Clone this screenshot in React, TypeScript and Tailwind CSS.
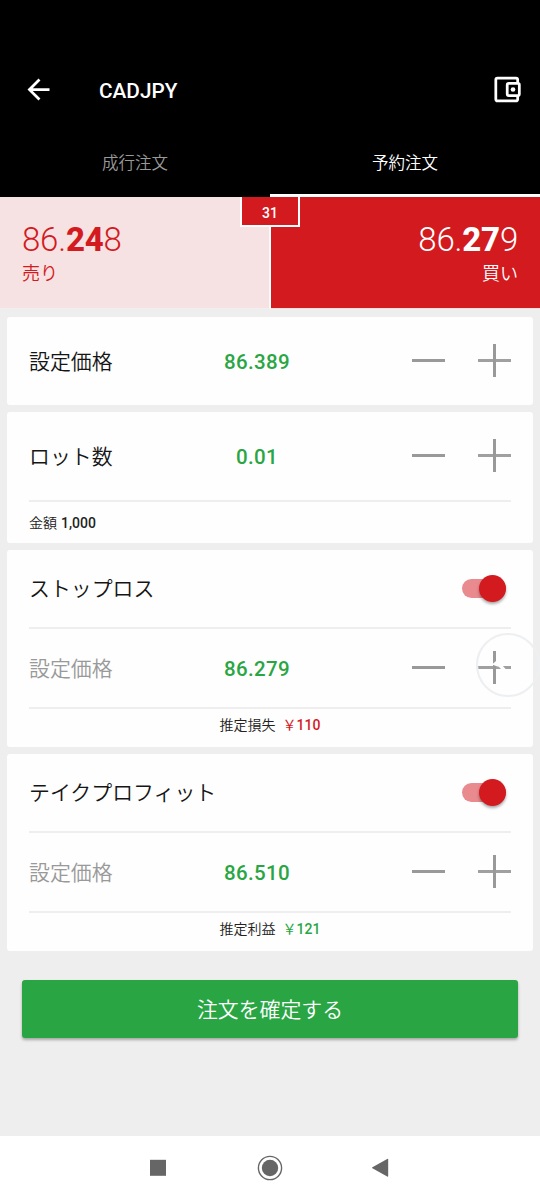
import type { ReactNode } from "react";

function Minus() {
  return (
    <svg className="block h-[33px] w-[33px]" viewBox="0 0 33 33" aria-hidden="true">
      <path d="M0 15h33v3H0z" fill="#999999" />
    </svg>
  );
}

function Plus() {
  return (
    <svg className="block h-[33px] w-[33px]" viewBox="0 0 33 33" aria-hidden="true">
      <path d="M0 15h33v3H0z" fill="#a0a0a0" />
      <path d="M15 0h3v33h-3z" fill="#999999" />
    </svg>
  );
}

function Touch() {
  return (
    <svg
      className="pointer-events-none absolute -top-[19px] -left-[3px] h-[66px] w-[66px]"
      viewBox="0 0 66 66"
      aria-hidden="true"
    >
      <circle cx="33" cy="33" r="31" fill="none" stroke="#edeff1" strokeWidth="2.2" />
      <path d="M17 32.5 L21 29 L25.5 34 L22.5 34.5 Z" fill="#fefefe" />
      <path d="M22.5 33.5 L27.5 33.5 L31 37.5 L27 38 Z" fill="#fefefe" />
    </svg>
  );
}

type StepperProps = { label: string; value: string; muted?: boolean; touched?: boolean };

function Stepper({ label, value, muted, touched }: StepperProps) {
  return (
    <div className="flex h-full items-center">
      <div className={muted ? "w-[168px] pt-0.5 text-[#999999]" : "w-[168px] pt-0.5 text-[#151515]"}>{label}</div>
      <div className="w-[120px] pt-0.5 text-center text-[20.5px] font-medium tracking-[0.35px] text-[#29a643]">{value}</div>
      <div className="relative -top-px ml-auto flex gap-[33px]">
        <button aria-label="minus"><Minus /></button>
        <button aria-label="plus" className="relative">
          <Plus />
          {touched && <Touch />}
        </button>
      </div>
    </div>
  );
}

function Card({ className, children }: { className: string; children: ReactNode }) {
  return <section className={"rounded-[3px] bg-[#fefefe] px-[22px] " + className}>{children}</section>;
}

function Switch() {
  return (
    <button role="switch" aria-checked="true" aria-label="toggle" className="mr-[5px] flex h-7 w-[44px] items-center rounded-full">
      <span className="flex h-[19px] w-full items-center justify-end rounded-full bg-[#e98a8f]">
        <span className="h-[27px] w-[27px] shrink-0 rounded-full bg-[#d31a1f] shadow-[0_2px_3px_rgba(0,0,0,0.35)]" />
      </span>
    </button>
  );
}

type LimitProps = { title: string; value: string; label: string; amount: string; color: string; touched?: boolean };

function LimitCard({ title, value, label, amount, color, touched }: LimitProps) {
  return (
    <Card className="h-[197px]">
      <div className="flex h-[77px] items-center justify-between text-[#151515]">
        <span className="pt-px">{title}</span>
        <Switch />
      </div>
      <div className="h-[82px] border-y-2 border-[#eeeeee]">
        <Stepper label="設定価格" value={value} muted touched={touched} />
      </div>
      <div className="flex h-[32px] items-center justify-center gap-[7px] text-[14px] text-[#222222]">
        <span>{label}</span>
        <span className={"font-medium " + color}>
          <span className="font-normal">￥</span>{amount}
        </span>
      </div>
    </Card>
  );
}

export default function App() {
  return (
    <div className="flex h-[1200px] w-[540px] flex-col overflow-hidden bg-[#eeeeee] font-[Roboto,'Noto_Sans_CJK_JP',sans-serif] text-[20.9px] leading-none font-[350]">
      <header className="flex h-[197px] shrink-0 flex-col bg-black pt-[59px] text-white">
        <div className="flex h-[60px] items-center pr-[16px] pl-[22px]">
          <svg className="h-[33px] w-[33px]" viewBox="0 0 24 24" fill="currentColor" aria-hidden="true">
            <path d="M20 11H7.83l5.59-5.59L12 4l-8 8 8 8 1.41-1.41L7.83 13H20v-2z" />
          </svg>
          <h1 className="ml-11 pt-1 text-[20.8px] font-medium">CADJPY</h1>
          <svg className="ml-auto h-[33px] w-[33px]" viewBox="0 0 24 24" aria-hidden="true">
            <path d="M19.4 7.5V4.9a1.2 1.2 0 0 0-1.2-1.2H4.7a1.2 1.2 0 0 0-1.2 1.2v14.2a1.2 1.2 0 0 0 1.2 1.2h13.5a1.2 1.2 0 0 0 1.2-1.2v-2.6" fill="none" stroke="currentColor" strokeWidth="2" />
            <rect x="11.8" y="7.6" width="8.8" height="8.8" rx="1.1" fill="none" stroke="currentColor" strokeWidth="2" />
            <circle cx="16" cy="12" r="1.7" fill="currentColor" />
          </svg>
        </div>
        <nav className="grid flex-1 grid-cols-2 text-[16.5px]">
          <button className="border-b-[3px] border-black pt-[18px] pb-[3px] leading-none text-[#999999]">成行注文</button>
          <button className="border-b-[3px] border-white pt-[18px] pb-[3px] leading-none">予約注文</button>
        </nav>
      </header>

      <div className="relative flex h-[112px] shrink-0">
        <div className="w-[271px] border-r-2 border-b border-r-white border-b-[#f3eeee] bg-[#f6e2e2] pt-[26px] pl-[22px] text-[#d31a1f]">
          <div className="text-[33px] leading-[34px] font-light tracking-[-0.2px]">86.<b className="font-extrabold">24</b>8</div>
          <div className="mt-2 text-[18px]">売り</div>
        </div>
        <div className="flex-1 border-b border-[#f7dede] bg-[#d31a1f] pt-[26px] pr-[22px] text-right text-white">
          <div className="text-[33px] leading-[34px] font-light tracking-[-0.2px]">86.<b className="font-extrabold">27</b>9</div>
          <div className="mt-2 text-[18px]">買い</div>
        </div>
        <div className="absolute top-0 left-[240px] flex h-[30px] w-[60px] items-center justify-center border-x-2 border-b-2 border-white bg-[#d31a1f] pt-[3px] text-[14px] font-medium text-white">
          31
        </div>
      </div>

      <main className="flex flex-col gap-[7px] px-[7px] pt-2">
        <Card className="h-[88px]"><Stepper label="設定価格" value="86.389" /></Card>
        <Card className="h-[131px]">
          <div className="h-[90px] border-b-2 border-[#eeeeee]"><Stepper label="ロット数" value="0.01" /></div>
          <div className="flex h-[41px] items-center gap-1 text-[14px] text-[#222222]">
            <span>金額</span><span className="font-medium">1,000</span>
          </div>
        </Card>
        <LimitCard title="ストップロス" value="86.279" label="推定損失" amount="110" color="text-[#d31a1f]" touched />
        <LimitCard title="テイクプロフィット" value="86.510" label="推定利益" amount="121" color="text-[#29a643]" />
      </main>

      <button className="mx-[22px] mt-[29px] h-[58px] shrink-0 rounded-[3px] bg-[#29a643] pt-[2px] text-[20.9px] text-white shadow-[0_2px_3px_rgba(0,0,0,0.3)]">
        注文を確定する
      </button>

      <footer className="mt-auto flex h-[64.5px] shrink-0 items-center justify-center gap-[87px] bg-white text-[#666666]">
        <svg className="h-[26px] w-[24px]" viewBox="0 0 24 26" fill="currentColor"><path d="M4 4.8h16v16H4z" /></svg>
        <svg className="h-[26px] w-[26px]" viewBox="0 0 26 26"><circle cx="13" cy="13" r="11.6" fill="none" stroke="currentColor" strokeWidth="1.4" /><circle cx="13" cy="13" r="8.2" fill="currentColor" /></svg>
        <svg className="h-[26px] w-[24px]" viewBox="0 0 24 26" fill="currentColor"><path d="M2.4 12.2 17.2 4q1-.5 1 .5v16.6q0 1-1 .5L2.4 13.2q-.8-.5 0-1Z" /></svg>
      </footer>
    </div>
  );
}
